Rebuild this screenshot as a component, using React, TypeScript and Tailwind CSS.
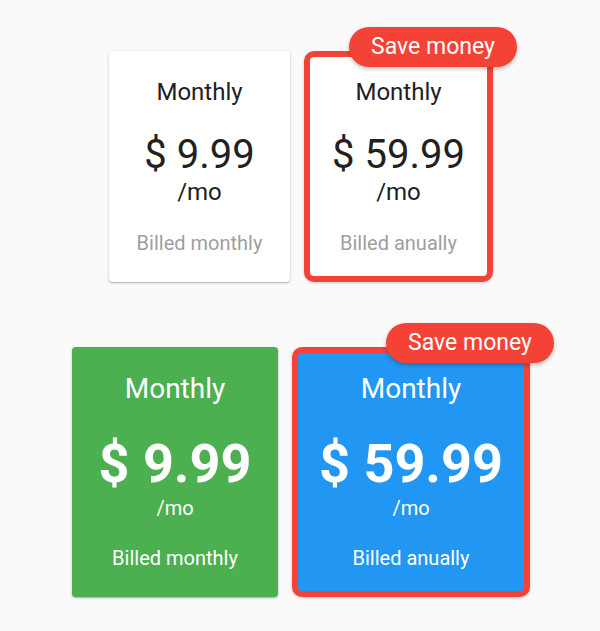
type Plan = {
  price: string;
  billed: string;
};

const monthly: Plan = { price: "$ 9.99", billed: "Billed monthly" };
const yearly: Plan = { price: "$ 59.99", billed: "Billed anually" };

const Badge = () => (
  <span className="absolute -top-[30px] -right-[30px] h-[40px] w-[168px] rounded-full bg-[#f44336] text-white text-[23px] leading-[40px] text-center shadow-[0_2px_4px_rgba(0,0,0,0.25)]">
    Save money
  </span>
);

const LightCard = ({ plan, featured }: { plan: Plan; featured?: boolean }) => (
  <div
    className={
      featured
        ? "relative box-border w-[189px] h-[231px] pt-[19px] rounded-[10px] border-[6px] border-[#f44336] bg-white flex flex-col items-center shadow-[0_1px_3px_rgba(0,0,0,0.2)]"
        : "relative box-border w-[181px] h-[231px] pt-[25px] rounded-[4px] bg-white flex flex-col items-center shadow-[0_1px_3px_rgba(0,0,0,0.2),0_1px_1px_rgba(0,0,0,0.14)]"
    }
  >
    {featured && <Badge />}
    <div className="text-[24px] leading-[32px] text-[#212121]">Monthly</div>
    <div className="mt-[27px] text-[40px] leading-[40px] text-[#212121]">{plan.price}</div>
    <div className="mt-[1px] text-[24px] leading-[32px] text-[#212121]">/mo</div>
    <div className="mt-[21px] text-[20px] leading-[28px] text-[#9e9e9e]">{plan.billed}</div>
  </div>
);

const ColorCard = ({ plan, featured }: { plan: Plan; featured?: boolean }) => (
  <div
    className={
      featured
        ? "relative box-border w-[238px] h-[250px] pt-[18px] rounded-[10px] border-[6px] border-[#f44336] bg-[#2196f3] flex flex-col items-center text-white shadow-[0_1px_3px_rgba(0,0,0,0.2)]"
        : "relative box-border w-[206px] h-[250px] pt-[24px] rounded-[4px] bg-[#4caf50] flex flex-col items-center text-white shadow-[0_1px_3px_rgba(0,0,0,0.2),0_1px_1px_rgba(0,0,0,0.14)]"
    }
  >
    {featured && <Badge />}
    <div className="text-[28px] leading-[36px]">Monthly</div>
    <div className="mt-[30px] text-[54px] leading-[54px] font-bold">{plan.price}</div>
    <div className="mt-[3px] text-[20px] leading-[28px]">/mo</div>
    <div className="mt-[22px] text-[20px] leading-[28px]">{plan.billed}</div>
  </div>
);

export default function App() {
  return (
    <div className="min-h-[631px] w-full bg-[#fafafa] pt-[51px] pl-[2px] flex flex-col items-center gap-[65px] font-['Roboto',sans-serif]">
      <div className="flex gap-[14px]">
        <LightCard plan={monthly} />
        <LightCard plan={yearly} featured />
      </div>
      <div className="flex gap-[14px]">
        <ColorCard plan={monthly} />
        <ColorCard plan={yearly} featured />
      </div>
    </div>
  );
}
